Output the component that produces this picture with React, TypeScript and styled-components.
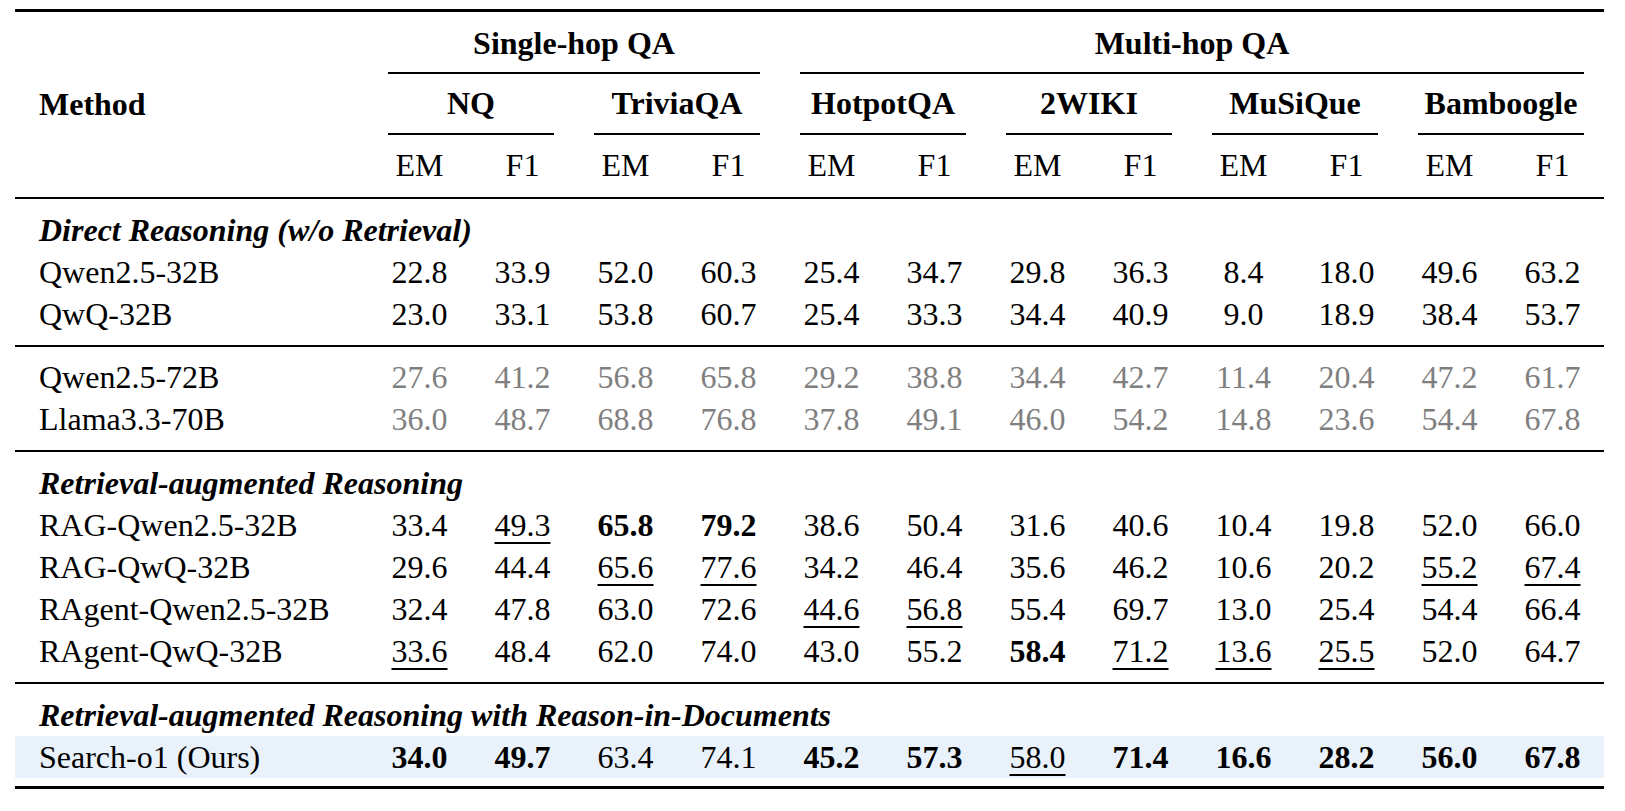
import styled, { createGlobalStyle } from 'styled-components';

const GlobalStyle = createGlobalStyle`
  html, body {
    margin: 0;
    padding: 0;
    background: #ffffff;
  }
  body {
    font-family: "Liberation Serif", "Times New Roman", serif;
    color: #000000;
  }
`;

const COLS = '353px repeat(12, 103px)';

const Page = styled.div`
  padding: 9px 0 0 15px;
`;

const Sheet = styled.div`
  width: 1589px;
  display: flex;
  flex-direction: column;
  font-size: 32px;
`;

const Rule = styled.div<{ $weight: number; $above?: number; $below?: number }>`
  height: ${(p) => p.$weight}px;
  background: #000;
  margin-top: ${(p) => p.$above ?? 0}px;
  margin-bottom: ${(p) => p.$below ?? 0}px;
`;

const HeadGrid = styled.div`
  display: grid;
  grid-template-columns: ${COLS};
  grid-template-rows: 42px 18px 42px 20px 42px;
`;

const MethodHead = styled.div`
  grid-column: 1;
  grid-row: 1 / 6;
  align-self: center;
  padding-left: 24px;
  font-weight: 700;
  line-height: 42px;
`;

const GroupTitle = styled.div<{ $row: number; $col: number; $span: number }>`
  grid-row: ${(p) => p.$row};
  grid-column: ${(p) => p.$col} / span ${(p) => p.$span};
  text-align: center;
  font-weight: 700;
  line-height: 42px;
`;

const CMid = styled.div<{ $row: number; $col: number; $span: number }>`
  grid-row: ${(p) => p.$row};
  grid-column: ${(p) => p.$col} / span ${(p) => p.$span};
  align-self: center;
  height: 1.5px;
  margin: 0 20px;
  background: #000;
`;

const SubHead = styled.div<{ $col: number }>`
  grid-row: 5;
  grid-column: ${(p) => p.$col};
  text-align: center;
  line-height: 42px;
`;

const Row = styled.div<{ $highlight?: boolean }>`
  display: grid;
  grid-template-columns: ${COLS};
  height: 42px;
  line-height: 42px;
  background: ${(p) => (p.$highlight ? '#e9f2fa' : 'transparent')};
`;

const NameCell = styled.div`
  padding-left: 24px;
  white-space: nowrap;
`;

const ValueCell = styled.div<{ $bold?: boolean; $under?: boolean; $muted?: boolean }>`
  text-align: center;
  font-weight: ${(p) => (p.$bold ? 700 : 400)};
  color: ${(p) => (p.$muted ? '#7f7f7f' : '#000')};
  text-decoration: ${(p) => (p.$under ? 'underline' : 'none')};
  text-decoration-thickness: 1.5px;
  text-underline-offset: 6px;
`;

const SectionTitle = styled.div`
  height: 42px;
  line-height: 42px;
  padding-left: 24px;
  font-weight: 700;
  font-style: italic;
`;

const DATASETS = ['NQ', 'TriviaQA', 'HotpotQA', '2WIKI', 'MuSiQue', 'Bamboogle'];

type Entry = { name: string; values: string[]; muted?: boolean; highlight?: boolean };

// "*" = best (bold), "_" = second best (underlined)
const DIRECT: Entry[] = [
  { name: 'Qwen2.5-32B', values: '22.8 33.9 52.0 60.3 25.4 34.7 29.8 36.3 8.4 18.0 49.6 63.2'.split(' ') },
  { name: 'QwQ-32B', values: '23.0 33.1 53.8 60.7 25.4 33.3 34.4 40.9 9.0 18.9 38.4 53.7'.split(' ') },
];

const LARGER: Entry[] = [
  { name: 'Qwen2.5-72B', muted: true, values: '27.6 41.2 56.8 65.8 29.2 38.8 34.4 42.7 11.4 20.4 47.2 61.7'.split(' ') },
  { name: 'Llama3.3-70B', muted: true, values: '36.0 48.7 68.8 76.8 37.8 49.1 46.0 54.2 14.8 23.6 54.4 67.8'.split(' ') },
];

const RETRIEVAL: Entry[] = [
  { name: 'RAG-Qwen2.5-32B', values: '33.4 _49.3 *65.8 *79.2 38.6 50.4 31.6 40.6 10.4 19.8 52.0 66.0'.split(' ') },
  { name: 'RAG-QwQ-32B', values: '29.6 44.4 _65.6 _77.6 34.2 46.4 35.6 46.2 10.6 20.2 _55.2 _67.4'.split(' ') },
  { name: 'RAgent-Qwen2.5-32B', values: '32.4 47.8 63.0 72.6 _44.6 _56.8 55.4 69.7 13.0 25.4 54.4 66.4'.split(' ') },
  { name: 'RAgent-QwQ-32B', values: '_33.6 48.4 62.0 74.0 43.0 55.2 *58.4 _71.2 _13.6 _25.5 52.0 64.7'.split(' ') },
];

const OURS: Entry[] = [
  {
    name: 'Search-o1 (Ours)',
    highlight: true,
    values: '*34.0 *49.7 63.4 74.1 *45.2 *57.3 _58.0 *71.4 *16.6 *28.2 *56.0 *67.8'.split(' '),
  },
];

function ResultRow({ entry }: { entry: Entry }) {
  return (
    <Row $highlight={entry.highlight}>
      <NameCell>{entry.name}</NameCell>
      {entry.values.map((v, i) => {
        const bold = v.startsWith('*');
        const under = v.startsWith('_');
        const text = bold || under ? v.slice(1) : v;
        return (
          <ValueCell key={i} $bold={bold} $under={under} $muted={entry.muted}>
            {text}
          </ValueCell>
        );
      })}
    </Row>
  );
}

function Header() {
  return (
    <HeadGrid>
      <MethodHead>Method</MethodHead>
      <GroupTitle $row={1} $col={2} $span={4}>Single-hop QA</GroupTitle>
      <GroupTitle $row={1} $col={6} $span={8}>Multi-hop QA</GroupTitle>
      <CMid $row={2} $col={2} $span={4} />
      <CMid $row={2} $col={6} $span={8} />
      {DATASETS.map((d, i) => (
        <GroupTitle key={d} $row={3} $col={2 + i * 2} $span={2}>
          {d}
        </GroupTitle>
      ))}
      {DATASETS.map((d, i) => (
        <CMid key={d} $row={4} $col={2 + i * 2} $span={2} />
      ))}
      {Array.from({ length: 12 }).map((_, i) => (
        <SubHead key={i} $col={2 + i}>
          {i % 2 === 0 ? 'EM' : 'F1'}
        </SubHead>
      ))}
    </HeadGrid>
  );
}

export default function App() {
  return (
    <Page>
      <GlobalStyle />
      <Sheet>
        <Rule $weight={3} $below={10} />
        <Header />
        <Rule $weight={2} $above={11} $below={10} />
        <SectionTitle>Direct Reasoning (w/o Retrieval)</SectionTitle>
        {DIRECT.map((e) => (
          <ResultRow key={e.name} entry={e} />
        ))}
        <Rule $weight={2} $above={10} $below={9} />
        {LARGER.map((e) => (
          <ResultRow key={e.name} entry={e} />
        ))}
        <Rule $weight={2} $above={10} $below={10} />
        <SectionTitle>Retrieval-augmented Reasoning</SectionTitle>
        {RETRIEVAL.map((e) => (
          <ResultRow key={e.name} entry={e} />
        ))}
        <Rule $weight={2} $above={10} $below={10} />
        <SectionTitle>Retrieval-augmented Reasoning with Reason-in-Documents</SectionTitle>
        {OURS.map((e) => (
          <ResultRow key={e.name} entry={e} />
        ))}
        <Rule $weight={3} $above={8} />
      </Sheet>
    </Page>
  );
}
